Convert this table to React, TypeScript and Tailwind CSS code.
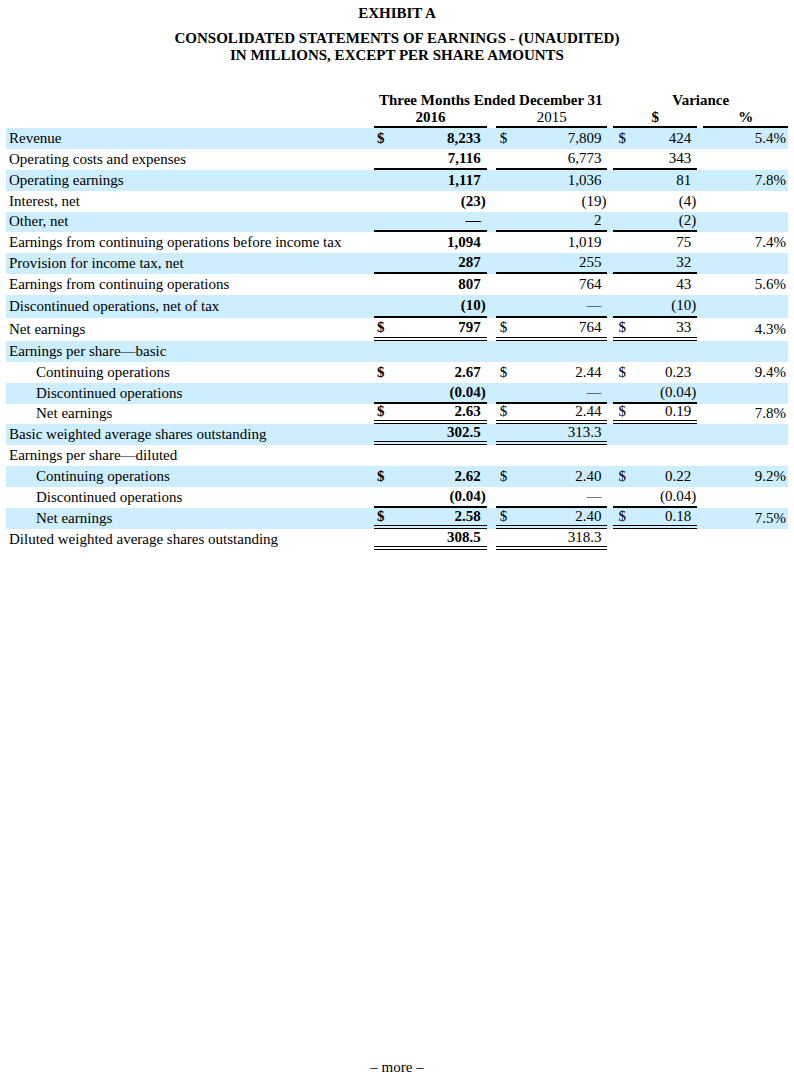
import React from "react";

type Line = "s" | "d" | "";
type Row = {
  label: string;
  indent?: boolean;
  a?: string;
  b?: string;
  c?: string;
  d?: string;
  dollar?: boolean;
  line?: Line[];
  h: string;
};

const S3: Line[] = ["s", "s", "s", ""];
const D3: Line[] = ["d", "d", "d", ""];
const D2: Line[] = ["d", "d", "", ""];

const rows: Row[] = [
  { label: "Revenue", a: "8,233", b: "7,809", c: "424", d: "5.4%", dollar: true, h: "h-[20.875px]" },
  { label: "Operating costs and expenses", a: "7,116", b: "6,773", c: "343", line: S3, h: "h-[20.875px]" },
  { label: "Operating earnings", a: "1,117", b: "1,036", c: "81", d: "7.8%", h: "h-[20.875px]" },
  { label: "Interest, net", a: "(23)", b: "(19)", c: "(4)", h: "h-[20.875px]" },
  { label: "Other, net", a: "—", b: "2", c: "(2)", line: S3, h: "h-[20.875px]" },
  { label: "Earnings from continuing operations before income tax", a: "1,094", b: "1,019", c: "75", d: "7.4%", h: "h-[20.875px]" },
  { label: "Provision for income tax, net", a: "287", b: "255", c: "32", line: S3, h: "h-[20.875px]" },
  { label: "Earnings from continuing operations", a: "807", b: "764", c: "43", d: "5.6%", h: "h-[20.875px]" },
  { label: "Discontinued operations, net of tax", a: "(10)", b: "—", c: "(10)", line: S3, h: "h-[22.5px]" },
  { label: "Net earnings", a: "797", b: "764", c: "33", d: "4.3%", dollar: true, line: D3, h: "h-[23.25px]" },
  { label: "Earnings per share—basic", h: "h-[21px]" },
  { label: "Continuing operations", indent: true, a: "2.67", b: "2.44", c: "0.23", d: "9.4%", dollar: true, h: "h-[20.875px]" },
  { label: "Discontinued operations", indent: true, a: "(0.04)", b: "—", c: "(0.04)", line: S3, h: "h-[20.875px]" },
  { label: "Net earnings", indent: true, a: "2.63", b: "2.44", c: "0.19", d: "7.8%", dollar: true, line: D3, h: "h-[20.875px]" },
  { label: "Basic weighted average shares outstanding", a: "302.5", b: "313.3", line: D2, h: "h-[20.875px]" },
  { label: "Earnings per share—diluted", h: "h-[20.875px]" },
  { label: "Continuing operations", indent: true, a: "2.62", b: "2.40", c: "0.22", d: "9.2%", dollar: true, h: "h-[20.875px]" },
  { label: "Discontinued operations", indent: true, a: "(0.04)", b: "—", c: "(0.04)", line: S3, h: "h-[20.875px]" },
  { label: "Net earnings", indent: true, a: "2.58", b: "2.40", c: "0.18", d: "7.5%", dollar: true, line: D3, h: "h-[20.875px]" },
  { label: "Diluted weighted average shares outstanding", a: "308.5", b: "318.3", line: D2, h: "h-[20.875px]" },
];

function lineCls(l?: Line) {
  if (l === "s") return "border-b-2 border-black";
  if (l === "d") return "border-b-4 border-double border-black";
  return "";
}

function Num({
  w,
  v,
  bold,
  dollar,
  dPad,
  line,
}: {
  w: string;
  v?: string;
  bold?: boolean;
  dollar?: boolean;
  dPad: string;
  line?: Line;
}) {
  const neg = !!v && v.startsWith("(");
  const main = v ? (neg ? v.slice(0, -1) : v) : "";
  return (
    <div className={`${w} h-full flex items-center ${lineCls(line)} ${bold ? "font-bold" : ""}`}>
      <span className={dPad}>{dollar ? "$" : ""}</span>
      <span className="ml-auto">{main}</span>
      <span className="w-[6px] shrink-0">{neg ? ")" : ""}</span>
    </div>
  );
}

export default function App() {
  return (
    <div className="h-[1080px] flex flex-col bg-white text-black font-['Liberation_Serif',serif] text-[15px] leading-[17px]">
      <div className="pt-[5px] text-center font-bold">
        <div>EXHIBIT A</div>
        <div className="mt-[8px]">CONSOLIDATED STATEMENTS OF EARNINGS - (UNAUDITED)</div>
        <div>IN MILLIONS, EXCEPT PER SHARE AMOUNTS</div>
      </div>

      <div className="mt-[28px] px-[6px] flex flex-col">
        <div className="flex h-[17px] font-bold">
          <div className="w-[369px]" />
          <div className="w-[234px] text-center">Three Months Ended December 31</div>
          <div className="w-[6px]" />
          <div className="w-[175px] text-center">Variance</div>
        </div>
        <div className="flex h-[19px]">
          <div className="w-[369px]" />
          <div className="w-[113px] text-center font-bold border-b-2 border-black">2016</div>
          <div className="w-[9px]" />
          <div className="w-[112px] text-center border-b-2 border-black">2015</div>
          <div className="w-[6px]" />
          <div className="w-[84px] text-center font-bold border-b-2 border-black">$</div>
          <div className="w-[6px]" />
          <div className="w-[85px] text-center font-bold border-b-2 border-black">%</div>
        </div>

        {rows.map((r, i) => {
          const l = r.line || ["", "", "", ""];
          return (
            <div key={i} className={`flex ${r.h} ${i % 2 === 0 ? "bg-[#cceeff]" : ""}`}>
              <div className={`w-[369px] h-full flex items-center ${r.indent ? "pl-[30px]" : "pl-[3px]"}`}>
                {r.label}
              </div>
              <Num w="w-[113px]" v={r.a} bold dollar={r.dollar} dPad="pl-[3px] font-bold" line={l[0]} />
              <div className="w-[9px]" />
              <Num w="w-[112px]" v={r.b} dollar={r.dollar} dPad="pl-[4px]" line={l[1]} />
              <div className="w-[6px]" />
              <Num w="w-[84px]" v={r.c} dollar={r.dollar} dPad="pl-[5px]" line={l[2]} />
              <div className="w-[6px]" />
              <div className={`w-[85px] h-full flex items-center justify-end pr-[2px] ${lineCls(l[3])}`}>
                {r.d || ""}
              </div>
            </div>
          );
        })}
      </div>

      <div className="mt-auto pb-[4px] text-center">– more –</div>
    </div>
  );
}
